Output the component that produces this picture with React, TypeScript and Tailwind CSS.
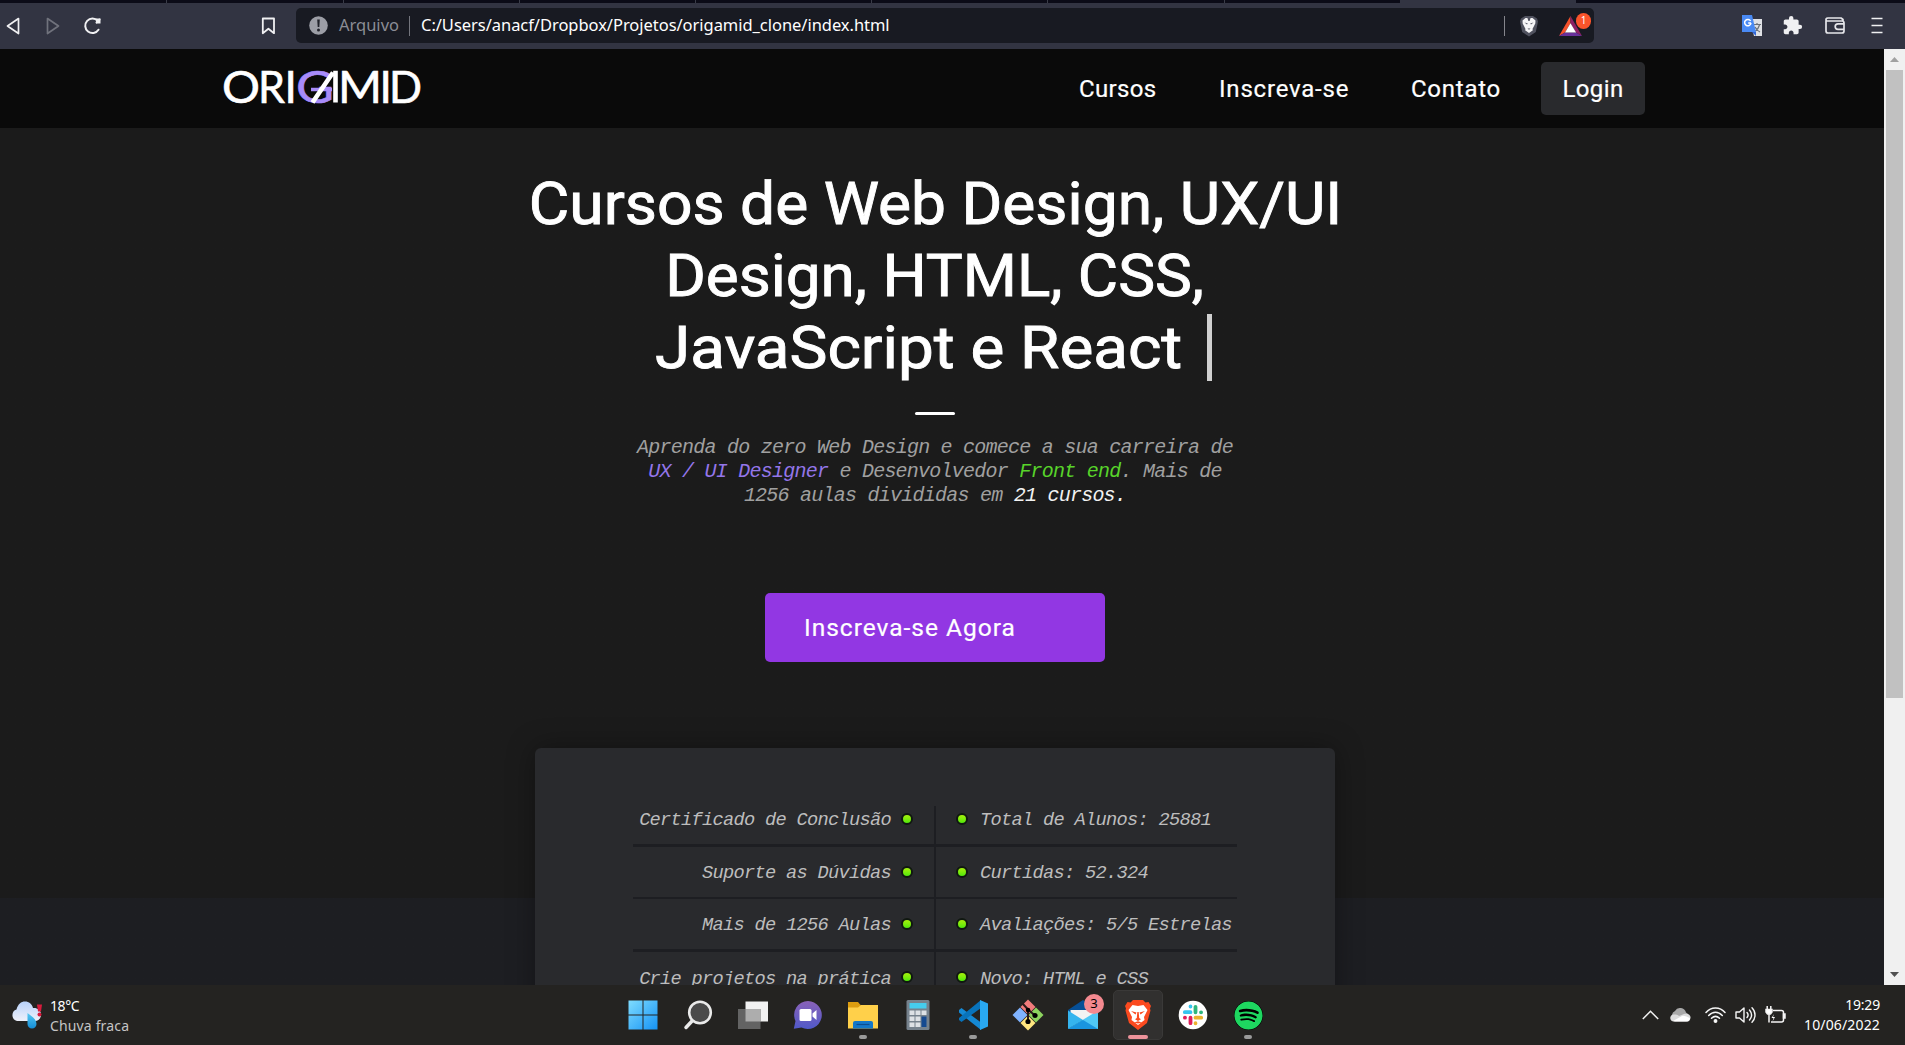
import React from 'react';
import { FaSpotify } from 'react-icons/fa';
import { MdExtension } from 'react-icons/md';

function Toolbar() {
  return (
    <div className="h-[49px] shrink-0 bg-[#323442]">
      <div className="flex h-[3px] bg-[#0b0b17]">
        <div className="w-[167px] border-r border-[#3a3c48]" />
        <div className="w-[177px] border-r border-[#3a3c48]" />
        <div className="w-[176px] border-r border-[#3a3c48]" />
        <div className="w-[176px] border-r border-[#3a3c48]" />
        <div className="w-[176px] border-r border-[#3a3c48]" />
        <div className="w-[176px] border-r border-[#3a3c48]" />
        <div className="w-[177px] border-r border-[#3a3c48]" />
        <div className="w-[175px]" />
        <div className="w-[176px] bg-[#323442]" />
      </div>
      <div className="flex h-[46px] items-center pb-[1px]">
        <svg className="ml-[6px] h-[18px] w-[14px]" viewBox="0 0 14 18" fill="none" stroke="#f0f0f2" strokeWidth="1.7" strokeLinejoin="round"><path d="M12.5 1.5 1.5 9l11 7.5z" /></svg>
        <svg className="ml-[26px] h-[18px] w-[14px]" viewBox="0 0 14 18" fill="none" stroke="#70727c" strokeWidth="1.7" strokeLinejoin="round"><path d="M1.5 1.5 12.5 9l-11 7.5z" /></svg>
        <svg className="ml-[23px] h-[18px] w-[20px]" viewBox="0 0 20 18" fill="none" stroke="#f0f0f2" strokeWidth="2" strokeLinecap="round"><path d="M15.5 12.7A7.2 7.2 0 1 1 14.8 4" /><path d="M13 1.5h4.5v5h-4.3z" fill="#f0f0f2" stroke="none" /><path d="m13.5 5.5 3-3" /></svg>
        <svg className="ml-[158px] h-[18px] w-[15px]" viewBox="0 0 15 18" fill="none" stroke="#f0f0f2" strokeWidth="1.8" strokeLinejoin="round"><path d="M1.8 1.5h11.2v14.7l-5.6-4.4-5.6 4.4z" /></svg>
        <div className="ml-[20px] flex h-[35px] w-[1298px] items-center rounded-[5px] bg-[#181a22] font-['Noto_Sans','Open_Sans',sans-serif] text-[16.5px]">
          <svg className="ml-[13px] h-[19px] w-[19px]" viewBox="0 0 19 19"><circle cx="9.5" cy="9.5" r="9.3" fill="#9c9ea6" /><path d="M8.2 3.5h2.6l-.5 7.5H8.7z" fill="#20222a" /><circle cx="9.5" cy="14" r="1.5" fill="#20222a" /></svg>
          <span className="ml-[11px] w-[60px] whitespace-nowrap text-[#8b8d95]">Arquivo</span>
          <span className="ml-[10px] h-[20px] w-[1px] bg-[#73757d]" />
          <span className="ml-[11px] whitespace-nowrap tracking-[-0.04px] text-white">C:/Users/anacf/Dropbox/Projetos/origamid_clone/index.html</span>
          <span className="ml-auto h-[20px] w-[1px] bg-[#85868d]" />
          <svg className="ml-[14px] h-[22px] w-[20px]" viewBox="0 0 20 22">
            <path d="M6 1h8l4 2.5 1 3-2.2 10.5L10 21.5 3.2 17 1 6.5l1-3z" fill="#50525f" />
            <path d="M6.5 3h7l3 2.5-.2 3-2.8 5.5.4 1.3-3.9 2.7-3.9-2.7.4-1.3-2.8-5.5-.2-3z" fill="#f5f5f7" />
            <path d="M5.500 7.500 8.800 8.500 8 9.600zM14.500 7.500l-3.300 1 .8 1.100zM8.500 13.500h3L10 14.800zM8.400 3l1 3h1.200l1-3" fill="#50525f" />
          </svg>
          <div className="relative mr-[3px] ml-[19px] h-[28px] w-[33px]">
            <svg className="absolute top-[4px] left-[1px] h-[20px] w-[23px]" viewBox="0 0 23 20">
              <path d="M11.5 0 0 20l6-3.5 5.5-9z" fill="#f4512b" />
              <path d="M11.5 0 23 20l-6-3.5-5.5-9z" fill="#8c2064" />
              <path d="M0 20h23l-6-3.5H6z" fill="#68309a" />
              <path d="m11.5 7.3 5.6 9.2H6z" fill="#fff" />
            </svg>
            <span className="absolute top-[1px] right-0 flex h-[16px] w-[15px] items-center justify-center rounded-full bg-[#fb542b] text-[10px] text-white">1</span>
          </div>
        </div>
        <svg className="ml-[148px] h-[22px] w-[21px]" viewBox="0 0 21 22">
          <path d="M8 4h12v17h-8z" fill="#dfe1e5" />
          <path d="M11 9.500h8M15 8v2M17.500 10c-.8 3-2.500 5-4.500 6.500M13 12c1 2 3 4 5 5" stroke="#6b7078" strokeWidth="1.200" fill="none" />
          <path d="M0 0h10l4 17H0z" fill="#4a8af4" />
          <path d="m10 17 4 4v-4z" fill="#3367d6" />
          <path d="M9 8H6.200M8.600 6A3.200 3.200 0 1 0 9 8" stroke="#fff" strokeWidth="1.500" fill="none" />
        </svg>
        <MdExtension className="ml-[19px] h-[21px] w-[21px] text-[#f0f0f2]" />
        <svg className="ml-[22px] h-[17px] w-[20px]" viewBox="0 0 20 17" fill="none" stroke="#e6e6ea" strokeWidth="1.700" strokeLinejoin="round"><path d="M1 3.500V14a2 2 0 0 0 2 2h14a2 2 0 0 0 2-2V6a2 2 0 0 0-2-2H1.500C.5 2.500 1 1 3 1h13l2 1.500v2M19 6.800h-6a2.800 2.800 0 0 0 0 5.600h6" /></svg>
        <svg className="ml-[26px] h-[17px] w-[12px]" viewBox="0 0 12 17" stroke="#f0f0f2" strokeWidth="1.700"><path d="M.5 1.500h11M.5 8.500h11M.5 15.500h11" /></svg>
      </div>
    </div>
  );
}

function Logo() {
  return (
    <svg className="h-[60px] w-[214px] overflow-visible" viewBox="-8 -14 214 60" fontFamily="Lato, sans-serif" fontSize="44" fill="#fff" stroke="#fff" strokeWidth="0.600">
      <text x="-2" y="32.500" textLength="38" lengthAdjust="spacingAndGlyphs">O</text>
      <text x="34" y="32.500" textLength="27" lengthAdjust="spacingAndGlyphs">R</text>
      <text x="60.500" y="32.500">I</text>
      <text x="72" y="32.500" fill="#a78bfa" stroke="#a78bfa" textLength="38" lengthAdjust="spacingAndGlyphs">G</text>
      <path d="M87 19.500h21" stroke="#a78bfa" strokeWidth="3.500" />
      <path d="M88.500 32.500 109 2.500M111.500 0.700V32.500" strokeWidth="4.600" />
      <text x="114" y="32.500" textLength="44" lengthAdjust="spacingAndGlyphs">M</text>
      <text x="155.500" y="32.500">I</text>
      <text x="165" y="32.500" textLength="33" lengthAdjust="spacingAndGlyphs">D</text>
    </svg>
  );
}

function Header() {
  return (
    <header className="flex h-[79px] items-center bg-[#0a0a0a] pr-[239px] pl-[216px] font-[Roboto,sans-serif] text-[24px] text-white [-webkit-text-stroke:0.2px_white]">
      <div className="pb-[6px]"><Logo /></div>
      <nav className="ml-auto flex items-center whitespace-nowrap">
        <a className="w-[140px] tracking-[0.350px]">Cursos</a>
        <a className="w-[192px] tracking-[0.800px]">Inscreva-se</a>
        <a className="w-[130px] tracking-[0.750px]">Contato</a>
        <a className="flex h-[53px] w-[104px] items-center justify-center rounded-[5px] bg-[#292a2d] tracking-[0.400px]">Login</a>
      </nav>
    </header>
  );
}

const features = [
  { left: 'Certificado de Conclusão', right: 'Total de Alunos: 25881', row: 'h-[41px] border-b-[3px]', cell: 'pb-[13px]' },
  { left: 'Suporte as Dúvidas', right: 'Curtidas: 52.324', row: 'h-[52px] border-b-2', cell: 'pb-[1px]' },
  { left: 'Mais de 1256 Aulas', right: 'Avaliações: 5/5 Estrelas', row: 'h-[53px] border-b-[3px]', cell: 'pb-[1px]' },
  { left: 'Crie projetos na prática', right: 'Novo: HTML e CSS', row: 'h-[52px] border-b-2', cell: '' },
];

function Dot() {
  return <span className="h-[12px] w-[12px] shrink-0 rounded-full border-2 border-[#101810] bg-linear-to-b from-[#a4f00c] to-[#4be80c]" />;
}

function Hero() {
  return (
    <main className="flex min-h-0 flex-1 flex-col items-center overflow-hidden bg-linear-to-b from-[#1b1b1b] from-[770px] to-[#1d1e22] to-[770px] pr-[14px]">
      <h1 className="mt-[40px] flex flex-col items-center font-[Roboto,sans-serif] text-[59.500px] leading-[72px] whitespace-nowrap text-white [-webkit-text-stroke:0.9px_white]">
        <span className="scale-x-[1.047]">Cursos de Web Design, UX/UI</span>
        <span className="scale-x-[1.042]">Design, HTML, CSS,</span>
        <span className="mr-[4px] flex items-center">
          <span className="w-[526px] origin-left scale-x-[1.072]">JavaScript e React</span>
          <span className="mb-[2px] ml-[26px] h-[67px] w-[5px] bg-[#d0d0d0]" />
        </span>
      </h1>
      <div className="mt-[28px] h-[3px] w-[40px] shrink-0 rounded-sm bg-white" />
      <p className="mt-[21px] text-center font-['Liberation_Mono',monospace] text-[20px] leading-[24px] tracking-[-0.760px] whitespace-pre text-[#a0a0a0] italic">
        Aprenda do zero Web Design e comece a sua carreira de<br />
        <span className="text-[#9476ea]">UX / UI Designer</span> e Desenvolvedor <span className="text-[#58d42a]">Front end</span>. Mais de<br />
        1256 aulas divididas em <span className="text-[#f2f2f2]">21 cursos.</span>
      </p>
      <button className="mt-[85px] h-[69px] w-[340px] shrink-0 rounded-[5px] bg-[#9237e3] pt-[1px] pl-[39px] text-left font-[Roboto,sans-serif] text-[24.500px] tracking-[1px] text-white [-webkit-text-stroke:0.2px_white]">Inscreva-se Agora</button>
      <section className="mt-[86px] flex h-[400px] w-[800px] shrink-0 flex-col rounded-[6px] bg-[#292a2d] px-[98px] pt-[58px] shadow-[0_0_28px_rgba(0,0,0,0.35)]">
        {features.map(({ left, right, row, cell }) => (
          <div key={left} className={`flex border-[#1d1e22] font-['Liberation_Mono',monospace] text-[18.700px] tracking-[-0.720px] whitespace-nowrap text-[#bdbdbd] italic ${row}`}>
            <div className={`flex w-[303px] items-center justify-end gap-[10px] border-r-2 border-[#1d1e22] pr-[21px] ${cell}`}>
              <span className="pt-[3px] leading-[22px]">{left}</span><Dot />
            </div>
            <div className={`flex items-center gap-[12px] pl-[20px] ${cell}`}>
              <Dot /><span className="pt-[3px] leading-[22px]">{right}</span>
            </div>
          </div>
        ))}
      </section>
    </main>
  );
}

function Scrollbar() {
  return (
    <div className="flex w-[21px] flex-col items-center bg-[#f0f0f0]">
      <div className="flex h-[21px] items-center"><svg className="h-[5px] w-[9px]" viewBox="0 0 9 5"><path d="M4.500 0 9 5H0z" fill="#a0a0a0" /></svg></div>
      <div className="h-[628px] w-[17px] bg-[#c1c1c1]" />
      <div className="mt-auto flex h-[21px] items-center"><svg className="h-[5px] w-[9px]" viewBox="0 0 9 5"><path d="M0 0h9L4.500 5z" fill="#505050" /></svg></div>
    </div>
  );
}

function AppSlot({ children, running }: { children: React.ReactNode; running?: boolean }) {
  return (
    <div className="relative flex h-[50px] w-[55.050px] items-center justify-center">
      {children}
      {running && <span className="absolute bottom-[1px] h-[4px] w-[8px] rounded-full bg-[#9a9a9a]" />}
    </div>
  );
}

function Taskbar() {
  const icon = 'h-[30px] w-[30px]';
  return (
    <footer className="flex h-[60px] shrink-0 items-center bg-[#242321] font-['Noto_Sans','Open_Sans',sans-serif] text-[14px] text-white">
      <div className="flex w-[615px] items-center">
        <svg className="ml-[11px] h-[30px] w-[31px]" viewBox="0 0 31 30">
          <defs><linearGradient id="cl" x2="0" y2="1"><stop stopColor="#b9d3fb" /><stop offset="1" stopColor="#eef0fa" /></linearGradient><linearGradient id="dr" x2="0" y2="1"><stop stopColor="#55c8f2" /><stop offset="1" stopColor="#148dd6" /></linearGradient></defs>
          <path d="M6 21a6 6 0 0 1-.5-11.500C7 4 10 1.500 14 1.500c4 0 7 2.500 8 6.500 4-.5 8 2 8 6.500s-3 6.500-6 6.500z" fill="url(#cl)" />
          <path d="M26 4.500h5l-1 7h-3z" fill="#d81b3c" /><circle cx="28.500" cy="14.500" r="2" fill="#d81b3c" />
          <path d="M16.500 13c4 3 9 6 9 11a4.500 4.500 0 0 1-9 0z" fill="url(#dr)" />
        </svg>
        <div className="mt-[1px] ml-[8px] leading-[20px]"><div className="tracking-[-0.400px]">18°C</div><div className="tracking-[0.150px] text-[#c5c5c5]">Chuva fraca</div></div>
      </div>
      <div className="flex items-center">
        <AppSlot>
          <svg className={icon} viewBox="0 0 30 30"><defs><linearGradient id="wn" x2="1" y2="1"><stop stopColor="#7fdcff" /><stop offset="1" stopColor="#1593f5" /></linearGradient></defs><path d="M.5.500h14v14H.5zM15.500.500h14v14h-14zM.5 15.500h14v14H.5zM15.500 15.500h14v14h-14z" fill="url(#wn)" /></svg>
        </AppSlot>
        <AppSlot>
          <svg className={icon} viewBox="0 0 30 30" fill="none"><path d="M10 20 3 27.500" stroke="#eaeaea" strokeWidth="3.500" strokeLinecap="round" /><circle cx="17" cy="12.500" r="10.800" fill="#4a4a4a" stroke="#eaeaea" strokeWidth="2.600" /></svg>
        </AppSlot>
        <AppSlot>
          <svg className={icon} viewBox="0 0 30 30"><path d="M7.500 1.500H30v20H7.500z" fill="#f1f1f1" /><path d="M0 9h22.500v20H0z" fill="#636363" /><path d="M7.500 9h15v12.500h-15z" fill="#adadad" /></svg>
        </AppSlot>
        <AppSlot>
          <svg className={icon} viewBox="0 0 30 30"><defs><linearGradient id="ch" x2="0" y2="1"><stop stopColor="#8a62b8" /><stop offset="1" stopColor="#5059c9" /></linearGradient></defs><path d="M15 1a14 14 0 1 1-6.500 26.500L.8 28.800 2.500 21A14 14 0 0 1 15 1z" fill="url(#ch)" /><rect x="6.500" y="9" width="12" height="12" rx="1.500" fill="#fff" /><path d="m19.500 13.500 4-3.500v10l-4-3.500z" fill="#fff" /></svg>
        </AppSlot>
        <AppSlot running>
          <svg className={icon} viewBox="0 0 30 30"><path d="M0 2h10l3 3.500H30V15H0z" fill="#dd9d10" /><path d="M0 7.500h10l3-2.500h17v23.500H0z" fill="#ffd04a" /><path d="M5 28.500V23a2 2 0 0 1 2-2h16a2 2 0 0 1 2 2v5.500z" fill="#1478c8" /><path d="M8.500 24.500h13" stroke="#0c4e90" strokeWidth="1.200" /></svg>
        </AppSlot>
        <AppSlot>
          <svg className={icon} viewBox="0 0 30 30"><rect x="3.500" width="23" height="30" rx="1.500" fill="#76828d" /><path d="M6.500 3h17v5.500h-17z" fill="#46cdee" /><path d="M6.500 10.500h5v4.500h-5zM12.500 10.500h5v4.500h-5zM18.500 10.500h5v4.500h-5zM6.500 16.500h5V21h-5zM12.500 16.500h5V21h-5zM6.500 22.500h5V27h-5zM12.500 22.500h5V27h-5z" fill="#dde1e5" /><path d="M18.500 16.500h5V27h-5z" fill="#164a90" /></svg>
        </AppSlot>
        <AppSlot running>
          <svg className={icon} viewBox="0 0 30 30"><path d="m1 10 2.500-2L23 22.500V30L1 12.500z" fill="#1589d4" /><path d="m1 20 2.500 2L23 8V0L1 18z" fill="#0873bb" /><path d="M22 0 30 3.500v23L22 30z" fill="#29a9f2" /></svg>
        </AppSlot>
        <AppSlot>
          <svg className="h-[32px] w-[32px]" viewBox="0 0 32 32"><path d="m16 .5 7.500 7.500-7.500 7.500L8.500 8z" fill="#f17b7b" /><path d="M8 8.500 15.500 16 8 23.500.5 16z" fill="#80b3ff" /><path d="m24 8.500 7.500 7.500-7.500 7.500-7.500-7.500z" fill="#8dd35f" /><path d="m16 16.500 7.500 7.500-7.500 7.500L8.500 24z" fill="#ffe680" /><path d="m10.500 4.500 5.500 6v13M16 10.500l7.500 6.500" stroke="#2b1a1a" strokeWidth="2" fill="none" /><circle cx="16" cy="11" r="2.300" /><circle cx="16" cy="22.500" r="2.600" /><circle cx="23" cy="16.500" r="2.600" /></svg>
        </AppSlot>
        <AppSlot>
          <svg className={icon} viewBox="0 0 30 30"><path d="M0 10 15 0l15 10v10H0z" fill="#064f96" /><path d="M2.500 10h25v10h-25z" fill="#f3f3f3" /><path d="M0 10.500 15 20 0 29z" fill="#35b4ee" /><path d="M30 10.500 0 29h30z" fill="#50c8f5" /><path d="M0 29 15 20l15 9z" fill="#1a95df" /></svg>
          <span className="absolute top-[4px] right-[6.500px] flex h-[20px] w-[20px] items-center justify-center rounded-full bg-[#f4898f] text-[13px] text-black">3</span>
        </AppSlot>
        <AppSlot>
          <div className="relative flex h-[50px] w-[50px] items-center justify-center rounded-[5px] border border-[#3a3938] bg-[#31302f]">
            <svg className="h-[30px] w-[26px]" viewBox="0 0 26 30">
              <path d="M8 0h10l2.500 2.500 3-.5L26 6l-1 2.500.5 2L22 23l-9 7-9-7L.5 10.500l.5-2L0 6l2.500-4 3 .5z" fill="#fb4a1f" />
              <path d="m7.500 5 5.500 1 5.500-1 4 5-3.500 7 .5 3-6.500 5-6.500-5 .5-3L3.500 10z" fill="#fff" />
              <path d="m6 11 5.500 1.500-1 2zM20 11l-5.500 1.500 1 2zM12.300 12h1.400l.5 6 1.800 1.300-3 1.700-3-1.700 1.800-1.300zM9 22.500l4-1.300 4 1.300-4 1z" fill="#fb4a1f" />
            </svg>
            <span className="absolute bottom-0 h-[4px] w-[20px] rounded-full bg-[#ec939b]" />
          </div>
        </AppSlot>
        <AppSlot>
          <svg className={icon} viewBox="0 0 30 30" strokeWidth="3.800" strokeLinecap="round"><circle cx="15" cy="15" r="14.300" fill="#fff" /><path d="M6.800 12.200h5.700M12.500 6.500v.1" stroke="#36c5f0" /><path d="M17.500 6.800v5.500M23 12.300h.1" stroke="#2eb67d" /><path d="M17.500 17.700h5.700M17.500 23.200v.1" stroke="#ecb22e" /><path d="M12.500 17.700v5.500M6.900 17.700h.1" stroke="#e01e5a" /></svg>
        </AppSlot>
        <AppSlot running>
          <FaSpotify className="h-[29px] w-[29px] rounded-full bg-black text-[#1ed760]" />
        </AppSlot>
      </div>
      <div className="ml-auto flex items-center">
        <svg className="h-[10px] w-[17px]" viewBox="0 0 17 10" fill="none" stroke="#f0f0f0" strokeWidth="1.500"><path d="m.8 9 7.700-7.700L16.200 9" /></svg>
        <svg className="ml-[11px] h-[14px] w-[21px]" viewBox="0 0 21 14"><path d="M4 11a4.500 4.500 0 0 1 1-8 6 6 0 0 1 11 1.500 4.500 4.500 0 0 1 2 7z" fill="#a8a8a8" /><path d="M4 13.500c-5 0-5-7 0-7 2 0 4 0 5 1.500l5-2c4-1 7 1 6.500 4s-2 3.500-4 3.500z" fill="#dcdcdc" /><path d="m3 13 9-5c2-1 5 1 8 2-.3 2.500-1.500 3.500-3.500 3.500H5z" fill="#fff" /></svg>
        <svg className="ml-[14px] h-[16px] w-[21px]" viewBox="0 0 21 16" fill="none" stroke="#f5f5f5" strokeWidth="1.500" strokeLinecap="round"><path d="M1 5.500C6-.5 15-.5 20 5.500M3.700 8.500c4-4.500 9.600-4.500 13.600 0M6.500 11.300c2.500-2.500 5.500-2.500 8 0" /><circle cx="10.500" cy="14" r="1.200" fill="#fff" /></svg>
        <svg className="ml-[9px] h-[18px] w-[21px]" viewBox="0 0 21 18" fill="none" stroke="#f5f5f5" strokeWidth="1.400" strokeLinecap="round" strokeLinejoin="round"><path d="M1 6v6h3.500L9 16V2L4.500 6zM12 6.500c1.300 1.500 1.300 3.500 0 5M14.500 4c2.500 3 2.500 7 0 10M17 1.800c4 4 4 10.400 0 14.400" /></svg>
        <svg className="ml-[9px] h-[18px] w-[21px]" viewBox="0 0 21 18" fill="none" stroke="#f5f5f5" strokeWidth="1.500"><path d="M8 4.500h8.500a2 2 0 0 1 2 2V14a2 2 0 0 1-2 2H6" /><path d="M18.500 8H20v4h-1.500z" fill="#fff" /><path d="M1 3.500h6v2.500L5.500 8h-3L1 6zM2.200 0v3M5.800 0v3" fill="#fff" /><path d="M4 8v8.500" /><path d="m9 8-2.500 4h2l-1 3.500 2.500-4.500H8z" fill="#fff" stroke="none" /></svg>
        <div className="mr-[25px] ml-[18px] w-[76px] text-right leading-[20px] whitespace-nowrap"><div className="tracking-[-0.200px]">19:29</div><div className="flex justify-end tracking-[0.150px]">10/06/2022</div></div>
      </div>
    </footer>
  );
}

export default function App() {
  return (
    <div className="flex h-screen w-full flex-col overflow-hidden bg-[#1b1b1b]">
      <Toolbar />
      <div className="flex min-h-0 flex-1">
        <div className="flex min-w-0 flex-1 flex-col">
          <Header />
          <Hero />
        </div>
        <Scrollbar />
      </div>
      <Taskbar />
    </div>
  );
}
